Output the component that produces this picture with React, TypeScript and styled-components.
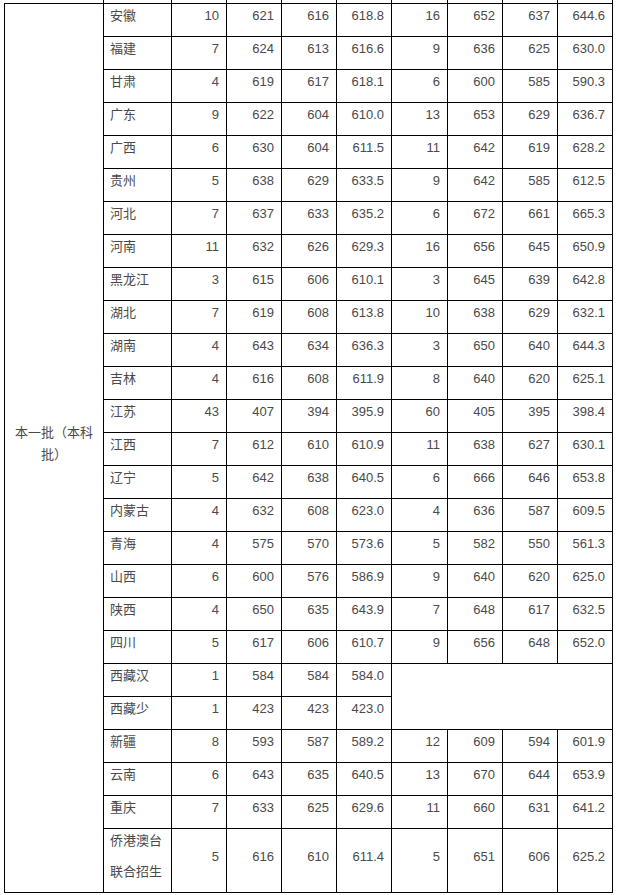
import React from 'react';
import styled, { createGlobalStyle } from 'styled-components';

const GlobalStyle = createGlobalStyle`
  html, body {
    margin: 0;
    padding: 0;
    background: #fff;
  }
  body {
    font-family: "Liberation Sans", "Noto Sans CJK SC", sans-serif;
  }
`;

const Viewport = styled.div`
  width: 617px;
  height: 895px;
  overflow: hidden;
  padding-left: 4px;
  box-sizing: border-box;
`;

const Table = styled.table`
  border-collapse: collapse;
  table-layout: fixed;
  width: 609px;
  margin-top: -30px;
  font-size: 13px;
  color: #4a4a4a;
`;

const Cell = styled.td<{ $align?: 'left' | 'right' | 'center'; $valign?: 'top' | 'middle' }>`
  border: 1px solid #000;
  padding: 0 7px 8px 6px;
  line-height: 24px;
  text-align: ${(p) => p.$align ?? 'right'};
  vertical-align: ${(p) => p.$valign ?? 'middle'};
  white-space: nowrap;
  overflow: hidden;
`;

const BatchCell = styled.td`
  border: 1px solid #000;
  padding: 0 6px 8px;
  line-height: 22px;
  text-align: center;
  vertical-align: middle;
`;

const CutCell = styled.td<{ $noLeft?: boolean }>`
  border: 1px solid #000;
  border-left: ${(p) => (p.$noLeft ? 'none' : '1px solid #000')};
  height: 32px;
  padding: 0;
`;

const TwoLines = styled.div`
  display: flex;
  flex-direction: column;
  gap: 7px;
`;

type Row = [string, ...(string | number)[]];

const rows: Row[] = [
  ['安徽', 10, 621, 616, '618.8', 16, 652, 637, '644.6'],
  ['福建', 7, 624, 613, '616.6', 9, 636, 625, '630.0'],
  ['甘肃', 4, 619, 617, '618.1', 6, 600, 585, '590.3'],
  ['广东', 9, 622, 604, '610.0', 13, 653, 629, '636.7'],
  ['广西', 6, 630, 604, '611.5', 11, 642, 619, '628.2'],
  ['贵州', 5, 638, 629, '633.5', 9, 642, 585, '612.5'],
  ['河北', 7, 637, 633, '635.2', 6, 672, 661, '665.3'],
  ['河南', 11, 632, 626, '629.3', 16, 656, 645, '650.9'],
  ['黑龙江', 3, 615, 606, '610.1', 3, 645, 639, '642.8'],
  ['湖北', 7, 619, 608, '613.8', 10, 638, 629, '632.1'],
  ['湖南', 4, 643, 634, '636.3', 3, 650, 640, '644.3'],
  ['吉林', 4, 616, 608, '611.9', 8, 640, 620, '625.1'],
  ['江苏', 43, 407, 394, '395.9', 60, 405, 395, '398.4'],
  ['江西', 7, 612, 610, '610.9', 11, 638, 627, '630.1'],
  ['辽宁', 5, 642, 638, '640.5', 6, 666, 646, '653.8'],
  ['内蒙古', 4, 632, 608, '623.0', 4, 636, 587, '609.5'],
  ['青海', 4, 575, 570, '573.6', 5, 582, 550, '561.3'],
  ['山西', 6, 600, 576, '586.9', 9, 640, 620, '625.0'],
  ['陕西', 4, 650, 635, '643.9', 7, 648, 617, '632.5'],
  ['四川', 5, 617, 606, '610.7', 9, 656, 648, '652.0'],
  ['西藏汉', 1, 584, 584, '584.0'],
  ['西藏少', 1, 423, 423, '423.0'],
  ['新疆', 8, 593, 587, '589.2', 12, 609, 594, '601.9'],
  ['云南', 6, 643, 635, '640.5', 13, 670, 644, '653.9'],
  ['重庆', 7, 633, 625, '629.6', 11, 660, 631, '641.2'],
];

const widths = [99, 68, 55, 55, 55, 55, 56, 55, 55, 55];

export default function App() {
  return (
    <>
      <GlobalStyle />
      <Viewport>
        <Table>
          <colgroup>
            {widths.map((w, i) => (
              <col key={i} style={{ width: w }} />
            ))}
          </colgroup>
          <tbody>
            <tr>
              {widths.map((_, i) => (
                <CutCell key={i} $noLeft={i === 0} />
              ))}
            </tr>
            {rows.map((r, i) => (
              <tr key={r[0]}>
                {i === 0 && <BatchCell rowSpan={rows.length + 1}>本一批（本科批）</BatchCell>}
                <Cell $align="left">{r[0]}</Cell>
                {r.slice(1).map((v, j) => (
                  <Cell key={j}>{v}</Cell>
                ))}
                {r[0] === '西藏汉' && <Cell colSpan={4} rowSpan={2} />}
              </tr>
            ))}
            <tr>
              <Cell $align="left" $valign="top">
                <TwoLines>
                  <span>侨港澳台</span>
                  <span>联合招生</span>
                </TwoLines>
              </Cell>
              {[5, 616, 610, '611.4', 5, 651, 606, '625.2'].map((v, j) => (
                <Cell key={j}>{v}</Cell>
              ))}
            </tr>
          </tbody>
        </Table>
      </Viewport>
    </>
  );
}
